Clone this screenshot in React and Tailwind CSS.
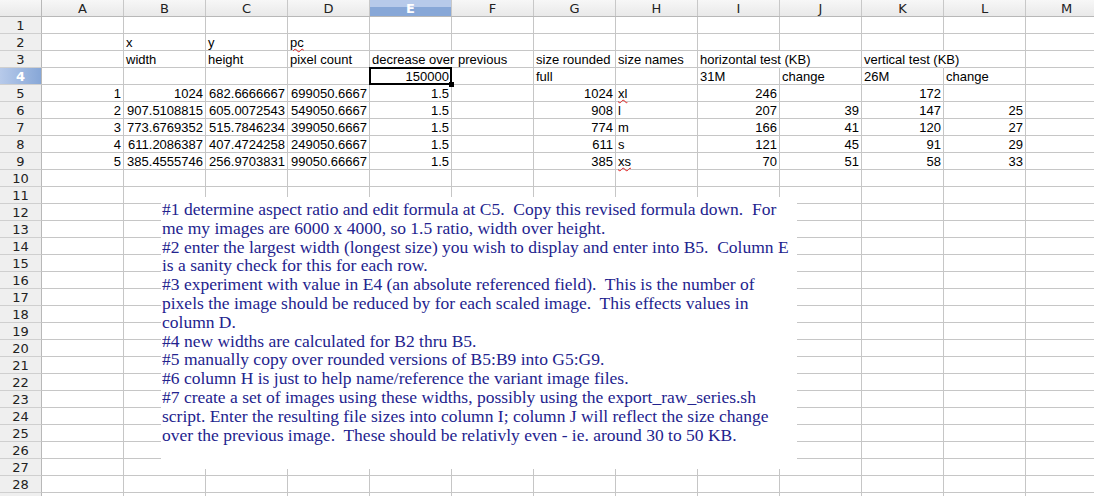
const cols = ['A', 'B', 'C', 'D', 'E', 'F', 'G', 'H', 'I', 'J', 'K', 'L', 'M'];

// cell values per row: { colIndex: [text, align, flags] }
const data = {
    2: { 1: ['x'], 2: ['y'], 3: ['pc', 'l', 'wavy'] },
    3: {
        1: ['width'], 2: ['height'], 3: ['pixel count'],
        4: ['decrease over previous', 'l', 'spill'],
        6: ['size rounded'], 7: ['size names'],
        8: ['horizontal test (KB)', 'l', 'spill'],
        10: ['vertical test (KB)', 'l', 'spill'],
    },
    4: { 4: ['150000', 'r'], 6: ['full'], 8: ['31M'], 9: ['change'], 10: ['26M'], 11: ['change'] },
    5: { 0: ['1', 'r'], 1: ['1024', 'r'], 2: ['682.6666667', 'r'], 3: ['699050.6667', 'r'], 4: ['1.5', 'r'], 6: ['1024', 'r'], 7: ['xl', 'l', 'wavy'], 8: ['246', 'r'], 10: ['172', 'r'] },
    6: { 0: ['2', 'r'], 1: ['907.5108815', 'r'], 2: ['605.0072543', 'r'], 3: ['549050.6667', 'r'], 4: ['1.5', 'r'], 6: ['908', 'r'], 7: ['l'], 8: ['207', 'r'], 9: ['39', 'r'], 10: ['147', 'r'], 11: ['25', 'r'] },
    7: { 0: ['3', 'r'], 1: ['773.6769352', 'r'], 2: ['515.7846234', 'r'], 3: ['399050.6667', 'r'], 4: ['1.5', 'r'], 6: ['774', 'r'], 7: ['m'], 8: ['166', 'r'], 9: ['41', 'r'], 10: ['120', 'r'], 11: ['27', 'r'] },
    8: { 0: ['4', 'r'], 1: ['611.2086387', 'r'], 2: ['407.4724258', 'r'], 3: ['249050.6667', 'r'], 4: ['1.5', 'r'], 6: ['611', 'r'], 7: ['s'], 8: ['121', 'r'], 9: ['45', 'r'], 10: ['91', 'r'], 11: ['29', 'r'] },
    9: { 0: ['5', 'r'], 1: ['385.4555746', 'r'], 2: ['256.9703831', 'r'], 3: ['99050.66667', 'r'], 4: ['1.5', 'r'], 6: ['385', 'r'], 7: ['xs', 'l', 'wavy'], 8: ['70', 'r'], 9: ['51', 'r'], 10: ['58', 'r'], 11: ['33', 'r'] },
};

const notes = [
    '#1 determine aspect ratio and edit formula at C5.  Copy this revised formula down.  For',
    'me my images are 6000 x 4000, so 1.5 ratio, width over height.',
    '#2 enter the largest width (longest size) you wish to display and enter into B5.  Column E',
    'is a sanity check for this for each row.',
    '#3 experiment with value in E4 (an absolute referenced field).  This is the number of',
    'pixels the image should be reduced by for each scaled image.  This effects values in',
    'column D.',
    '#4 new widths are calculated for B2 thru B5.',
    '#5 manually copy over rounded versions of B5:B9 into G5:G9.',
    '#6 column H is just to help name/reference the variant image files.',
    '#7 create a set of images using these widths, possibly using the export_raw_series.sh',
    'script. Enter the resulting file sizes into column I; column J will reflect the size change',
    'over the previous image.  These should be relativly even - ie. around 30 to 50 KB.',
];

const rows = Array.from({ length: 29 }, (_, i) => i + 1);

function Cell({ row, col }) {
    const cell = data[row]?.[col];
    const [text, align, flag] = cell || [];
    const selected = row === 4 && col === 4;
    return (
        <div className={`relative w-[82px] h-[17px] shrink-0 border-b border-r border-b-[#c6c6c6] ${flag === 'spill' ? 'border-r-transparent' : 'border-r-[#c6c6c6]'}`}>
            {text && (
                <div className={`absolute inset-y-0 z-10 flex items-end whitespace-nowrap leading-[14px] ${align === 'r' ? 'right-[2px] justify-end' : 'left-[2px]'}`}>
                    <span className={flag === 'wavy' ? 'underline decoration-wavy decoration-[#e02020] decoration-1 underline-offset-1' : ''}>{text}</span>
                </div>
            )}
            {selected && (
                <>
                    <div className="absolute -left-px -top-px w-[83px] h-[18px] border-2 border-black z-20" />
                    <div className="absolute -right-[3px] -bottom-[3px] w-[5px] h-[5px] bg-black z-30" />
                </>
            )}
        </div>
    );
}

export default function App() {
    return (
        <div className="relative w-[1094px] h-[496px] overflow-hidden bg-white text-[13px] text-black" style={{ fontFamily: '"Liberation Sans", Arial, sans-serif' }}>
            {/* column headers */}
            <div className="flex h-[17px] bg-linear-to-b from-[#f7f7f7] to-[#e9e9e9] border-b border-[#b8b8b8]">
                <div className="w-[42px] shrink-0 border-r border-[#b8b8b8]" />
                {cols.map((c, i) => (
                    <div key={c} className={`w-[82px] shrink-0 flex items-center justify-center border-r border-[#c8c8c8] text-[13px] leading-none ${i === 4 ? 'bg-[linear-gradient(to_bottom,#b7caea_0%,#b7caea_42%,#87a7d7_42%,#87a7d7_100%)] text-white font-bold' : 'text-[#222]'}`} style={{ fontFamily: '"DejaVu Sans", sans-serif' }}>
                        {c}
                    </div>
                ))}
            </div>

            {rows.map((r) => (
                <div key={r} className="flex h-[17px]">
                    <div className={`w-[42px] shrink-0 flex items-center justify-center border-r border-b border-r-[#b8b8b8] border-b-[#cfcfcf] text-[13px] leading-none ${r === 4 ? 'bg-[linear-gradient(to_right,#b7caea,#87a7d7)] text-white font-bold' : 'bg-[#efefef] text-[#222]'}`} style={{ fontFamily: '"DejaVu Sans", sans-serif' }}>
                        {r < 29 ? r : ''}
                    </div>
                    {cols.map((c, i) => <Cell key={c} row={r} col={i} />)}
                </div>
            ))}

            {/* text box drawing object over the sheet */}
            <div className="absolute left-[161px] top-[197px] w-[636px] h-[272px] bg-white z-40 pl-[1px] pt-[3px] text-[#23238e] text-[17.5px] leading-[18.8px]" style={{ fontFamily: '"Liberation Serif", "Times New Roman", serif' }}>
                {notes.map((line, i) => (
                    <div key={i} className="whitespace-pre">{line}</div>
                ))}
            </div>
        </div>
    );
}
